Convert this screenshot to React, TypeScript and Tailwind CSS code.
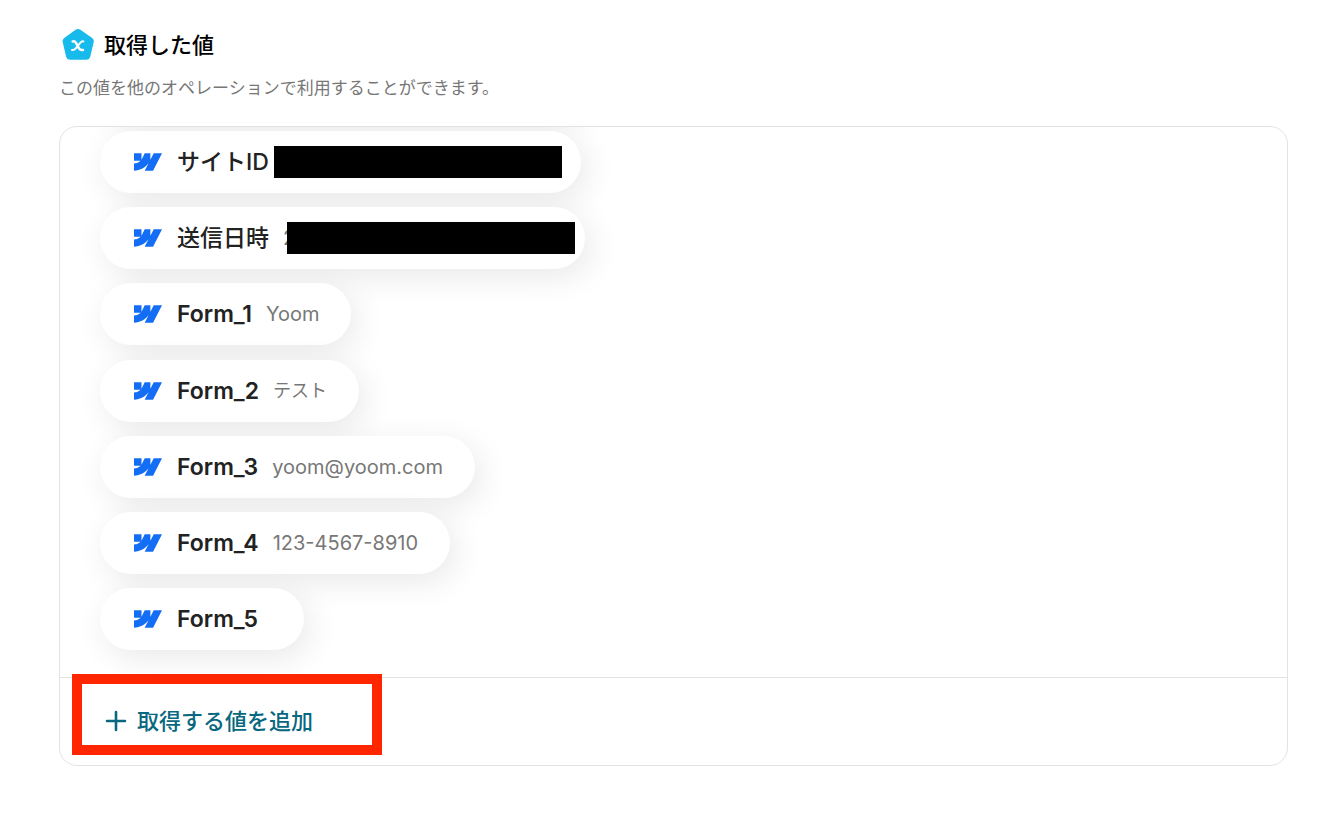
import React from "react";

type Item = {
  label: string;
  value?: string;
  japaneseLabel?: boolean;
  japaneseValue?: boolean;
  redaction?: "full" | "partial";
};

const items: Item[] = [
  { label: "サイトID", japaneseLabel: true, redaction: "full" },
  { label: "送信日時", japaneseLabel: true, value: "2", redaction: "partial" },
  { label: "Form_1", value: "Yoom" },
  { label: "Form_2", value: "テスト", japaneseValue: true },
  { label: "Form_3", value: "yoom@yoom.com" },
  { label: "Form_4", value: "123-4567-8910" },
  { label: "Form_5" },
];

function WebflowMark() {
  return (
    <svg viewBox="0 4.515 24 14.97" className="h-[18px] w-7 shrink-0" fill="#146ef5" aria-hidden="true">
      <path d="m24 4.515-7.658 14.97H9.149l3.205-6.204h-.144C9.566 16.713 5.621 18.973 0 19.485v-6.118s3.596-.213 5.71-2.435H0V4.515h6.417v5.278l.144-.001 2.622-5.277h4.854v5.244h.144l2.72-5.244H24Z" />
    </svg>
  );
}

function ValueBadge() {
  return (
    <svg viewBox="0 0 32 31" className="h-[31px] w-8 shrink-0" aria-hidden="true">
      <path
        d="M13.6 .8Q16 -.8 18.4 .8L30.2 8.9Q32.3 10.5 31.7 13L28.4 27.2Q27.5 30.8 24 30.8H8.4Q4.9 30.8 4 27.2L.7 13Q.1 10.5 2.2 8.9Z"
        fill="#16bbec"
      />
      <path
        d="M10.6 12.4c1.8-.2 2.7.3 3.5 1.7l2.9 5.2c.8 1.4 1.7 2.1 4 1.7"
        fill="none"
        stroke="#fff"
        strokeWidth="2.5"
        strokeLinecap="round"
      />
      <path
        d="M21.4 12.4c-1.4-.2-2.4.5-3.4 1.7l-4.2 5.2c-1 1.2-2 1.9-3.8 1.7"
        fill="none"
        stroke="#fff"
        strokeWidth="2"
        strokeLinecap="round"
      />
    </svg>
  );
}

const pillShadow = "shadow-[6px_8px_32px_rgba(0,0,0,0.09)]";

const endPadding = { none: "pr-8", full: "pr-[19px]", partial: "pr-[10px]" };

function Pill({ item }: { item: Item }) {
  return (
    <li
      className={`flex h-[62px] items-center rounded-full bg-white pl-[34px] ${endPadding[item.redaction ?? "none"]} ${pillShadow}`}
    >
      <WebflowMark />
      <span
        className={`ml-[15px] text-[23px] leading-8 text-[#222] ${item.japaneseLabel ? "font-medium" : "font-semibold"}`}
      >
        {item.label}
      </span>
      {item.value && (
        <span className={`ml-[14px] leading-8 text-[#777] ${item.japaneseValue ? "text-[18px]" : "text-[20px]"}`}>
          {item.value}
        </span>
      )}
      {item.redaction && (
        <span
          className={`relative h-8 w-72 bg-black ${item.redaction === "partial" ? "-ml-2" : "ml-[5px]"}`}
        />
      )}
      {!item.value && !item.redaction && <span className="w-[14px]" />}
    </li>
  );
}

export default function App() {
  return (
    <main className="min-h-screen bg-white pt-[29px] pr-[50px] pb-[62px] pl-[59px] font-['Inter','Noto_Sans_CJK_JP',sans-serif]">
      <header>
        <div className="flex items-start gap-[10px] pl-[3px]">
          <ValueBadge />
          <h1 className="text-[22px] leading-8 font-medium text-black">取得した値</h1>
        </div>
        <p className="mt-[15px] text-[17px] leading-6 text-[#777]">
          この値を他のオペレーションで利用することができます。
        </p>
      </header>

      <section className="mt-[26px] overflow-hidden rounded-[18px] border border-[#e3e3e3]">
        <ul className="flex h-[550px] flex-col items-start justify-between overflow-hidden pb-[27px] pl-10">
          <li aria-hidden="true" className={`-mt-[72px] h-[62px] w-[480px] rounded-full ${pillShadow}`} />
          {items.map((item) => (
            <Pill key={item.label} item={item} />
          ))}
        </ul>
        <div className="relative border-t border-[#e3e3e3] px-[45px] pt-[27px] pb-7">
          <button type="button" className="flex items-center gap-[10px] text-[#08687f]">
            <svg viewBox="0 0 22 22" className="size-[22px]" fill="none" stroke="currentColor" strokeWidth="2.6" aria-hidden="true">
              <path d="M11 2v18M2 11h18" strokeLinecap="round" />
            </svg>
            <span className="text-[22px] leading-8 font-medium">取得する値を追加</span>
          </button>
          <div className="pointer-events-none absolute -top-1 left-3 h-[81px] w-[310px] border-[10px] border-[#ff2600]" />
        </div>
      </section>
    </main>
  );
}
